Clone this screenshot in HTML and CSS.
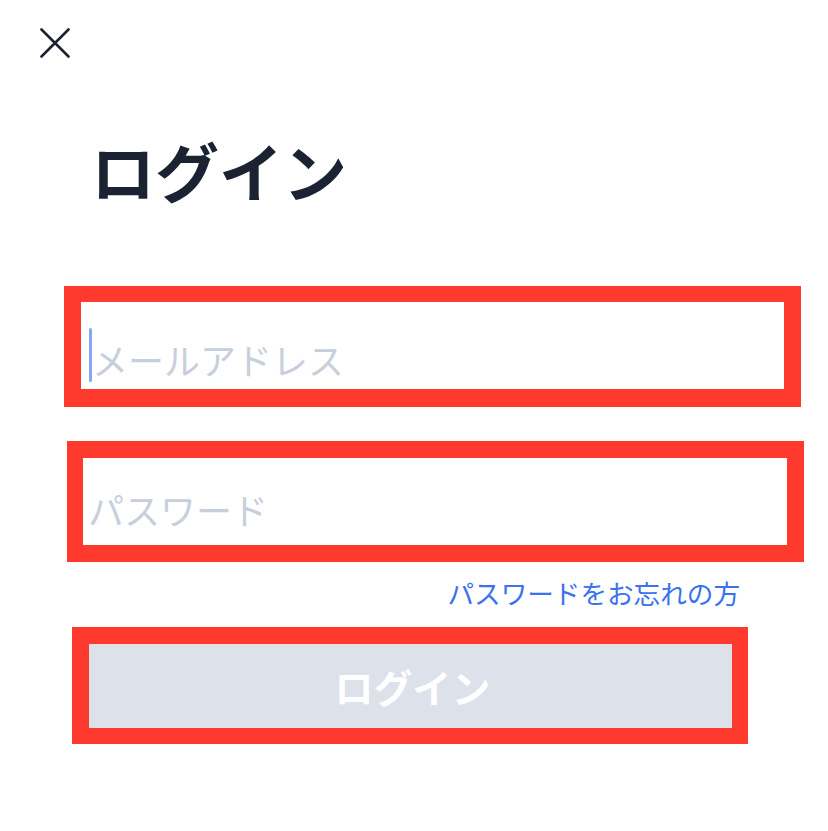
FILE: index.html
```html
<!DOCTYPE html>
<html lang="ja">
<head>
<meta charset="utf-8">
<title>ログイン</title>
<link rel="stylesheet" href="styles.css">
</head>
<body>
<div class="screen">
  <button class="close" aria-label="閉じる">
    <svg width="30" height="30" viewBox="0 0 30 30" aria-hidden="true">
      <path d="M1.5 1.5 L28.5 28.5 M28.5 1.5 L1.5 28.5" fill="none" stroke="#1b2333" stroke-width="2.6" stroke-linecap="round"/>
    </svg>
  </button>
  <h1 class="title">ログイン</h1>
  <div class="field field-email"><span class="caret"></span><span class="placeholder">メールアドレス</span></div>
  <div class="field field-password"><span class="placeholder">パスワード</span></div>
  <div class="forgot-row"><a class="forgot">パスワードをお忘れの方</a></div>
  <div class="submit-box"><span class="submit-label">ログイン</span></div>
</div>
</body>
</html>
```

FILE: styles.css
```css
html, body {
  margin: 0;
  padding: 0;
  background: #ffffff;
}

body {
  font-family: "Noto Sans CJK JP", "Noto Sans", sans-serif;
}

.screen {
  width: 828px;
  height: 831px;
  display: flex;
  flex-direction: column;
  align-items: flex-start;
}

.close {
  display: block;
  margin: 28px 0 0 40px;
  padding: 0;
  width: 30px;
  height: 30px;
  border: 0;
  background: none;
}

.close svg {
  display: block;
}

.title {
  margin: 79px 0 0 91px;
  font-size: 64px;
  line-height: 64px;
  font-weight: 700;
  color: #1b2333;
  letter-spacing: 0;
}

.field {
  box-sizing: border-box;
  display: flex;
  align-items: flex-start;
  width: 737px;
  height: 121px;
  border-style: solid;
  border-color: #fe3a2f;
  background: #ffffff;
}

.field-email {
  margin: 85px 0 0 64px;
  border-width: 16px 17px 18px 17px;
  padding: 26px 0 0 8px;
}

.field-email .placeholder {
  margin-top: 4px;
}

.field-password {
  margin: 34px 0 0 67px;
  border-width: 17px 17px 17px 16px;
  padding: 24px 0 0 5px;
}

.caret {
  display: block;
  width: 3px;
  height: 54px;
  border-radius: 2px;
  background: #86a6f6;
}

.placeholder {
  font-size: 36px;
  line-height: 54px;
  color: #c8cfdc;
}

.forgot-row {
  align-self: stretch;
  margin-top: 13px;
  padding-right: 88px;
  text-align: right;
}

.forgot {
  font-size: 26.6px;
  line-height: 36px;
  color: #3a72f0;
  text-decoration: none;
}

.submit-box {
  box-sizing: border-box;
  display: flex;
  align-items: center;
  justify-content: center;
  margin: 16px 0 0 72px;
  width: 676px;
  height: 117px;
  border-style: solid;
  border-color: #fe3a2f;
  border-width: 17px 16px 16px 17px;
  background: #dde1ea;
  background-clip: padding-box;
}

.submit-label {
  font-size: 39px;
  font-weight: 700;
  color: #ffffff;
  padding-left: 4px;
}
```
